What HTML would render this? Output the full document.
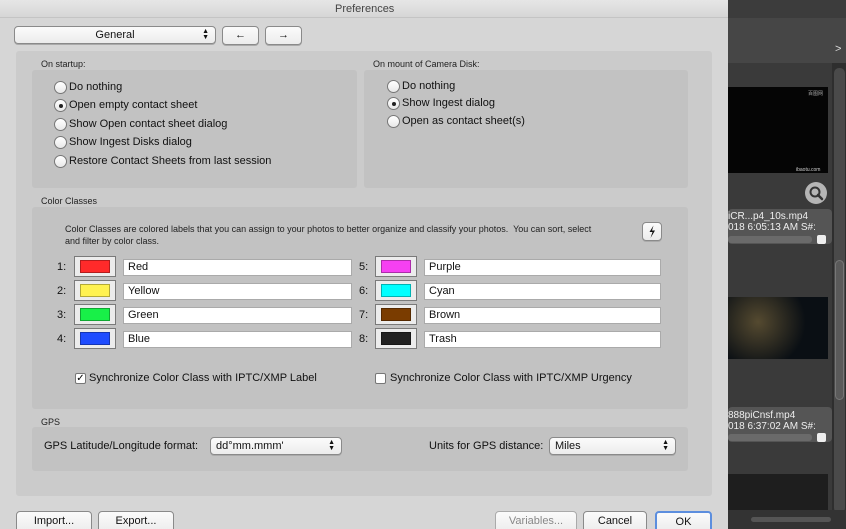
<!DOCTYPE html>
<html><head><style>
*{box-sizing:border-box;margin:0;padding:0}
html,body{width:846px;height:529px;overflow:hidden}
body{background:#2e2e2e;font-family:"Liberation Sans",sans-serif;position:relative}
.a{position:absolute}
.t{position:absolute;font-size:11px;color:#111;white-space:nowrap}
.s{font-size:9px;color:#222}
.btn{position:absolute;background:linear-gradient(#fbfbfb,#ececec);border:1px solid #8a8a8a;border-radius:4px;font-size:11px;text-align:center;color:#111;box-shadow:0 1px 0 #aaa}
.rad{position:absolute;width:13px;height:13px;border-radius:50%;border:1px solid #777;background:linear-gradient(#fff,#e8e8e8)}
.rad.on::after{content:"";position:absolute;left:3.5px;top:3.5px;width:4px;height:4px;border-radius:50%;background:#222}
.grp{position:absolute;background:#c2c2c2;border-radius:3px}
.sw{position:absolute;width:42px;height:21px;border:1px solid #7a7a7a;background:#ececec;padding:3px 5px}
.sw div{width:100%;height:100%;border:1px solid rgba(0,0,0,.3)}
.fld{position:absolute;height:17px;background:#fff;border:1px solid #aaa;font-size:11px;padding:1px 4px;color:#111}
.chk{position:absolute;width:11px;height:11px;border:1px solid #777;border-radius:2px;background:#fff;font-size:10px;line-height:9px;text-align:center}
.arr{position:absolute;right:6px;top:2px;font-size:7px;line-height:6px}
</style></head><body>
<div class="a" style="left:728px;top:0;width:118px;height:18px;background:#3c3c3c"></div>
<div class="a" style="left:728px;top:18px;width:118px;height:45px;background:#464646"></div>
<div class="t" style="left:835px;top:43px;color:#ddd;font-size:11px">&gt;</div>
<div class="a" style="left:728px;top:63px;width:104px;height:450px;background:#3a3a3a"></div>
<div class="a" style="left:834px;top:68px;width:11px;height:445px;background:#4a4a4a;border-radius:5px"></div>
<div class="a" style="left:835px;top:260px;width:9px;height:140px;background:#5a5a5a;border-radius:5px;border:1px solid #777"></div>
<div class="a" style="left:728px;top:87px;width:100px;height:86px;background:#050505"></div>
<div class="t" style="left:808px;top:90px;color:#aaa;font-size:5px">百图网</div>
<div class="t" style="left:796px;top:167px;color:#ccc;font-size:5px">ibaotu.com</div>
<div class="a" style="left:805px;top:182px;width:22px;height:22px;border-radius:50%;background:#b5b5b5"></div>
<svg class="a" style="left:805px;top:182px" width="22" height="22"><circle cx="10" cy="10" r="4.5" fill="none" stroke="#333" stroke-width="2"/><path d="M13 13l4 4" stroke="#333" stroke-width="2.5" stroke-linecap="round"/></svg>
<div class="a" style="left:728px;top:209px;width:104px;height:35px;background:#555;border-radius:4px"></div>
<div class="t" style="left:728px;top:211px;color:#eee;font-size:10px">iCR...p4_10s.mp4<br>018 6:05:13 AM S#:</div>
<div class="a" style="left:728px;top:236px;width:84px;height:7px;background:#6a6a6a;border-radius:3px"></div>
<div class="a" style="left:817px;top:235px;width:9px;height:9px;background:#eee;border-radius:2px"></div>
<div class="a" style="left:728px;top:297px;width:100px;height:62px;background:radial-gradient(circle at 30% 40%,#554a30,#0a0f14 60%)"></div>
<div class="a" style="left:728px;top:407px;width:104px;height:35px;background:#555;border-radius:4px"></div>
<div class="t" style="left:728px;top:410px;color:#eee;font-size:10px">888piCnsf.mp4<br>018 6:37:02 AM S#:</div>
<div class="a" style="left:728px;top:434px;width:84px;height:7px;background:#6a6a6a;border-radius:3px"></div>
<div class="a" style="left:817px;top:433px;width:9px;height:9px;background:#eee;border-radius:2px"></div>
<div class="a" style="left:728px;top:474px;width:100px;height:40px;background:#1e1e1e"></div>
<div class="a" style="left:728px;top:510px;width:118px;height:19px;background:#333"></div>
<div class="a" style="left:751px;top:517px;width:80px;height:5px;background:#555;border-radius:3px"></div>

<div class="a" style="left:0;top:0;width:728px;height:529px;background:#d6d6d6;border-radius:4px 4px 0 0"></div>
<div class="a" style="left:0;top:0;width:728px;height:18px;background:linear-gradient(#e6e6e6,#d6d6d6);border-bottom:1px solid #c4c4c4"></div>
<div class="t" style="left:335px;top:3px;color:#444;font-size:11px">Preferences</div>

<div class="btn" style="left:14px;top:26px;width:202px;height:18px;line-height:16px">General<span class="arr">▲<br>▼</span></div>
<div class="btn" style="left:222px;top:26px;width:37px;height:19px;line-height:16px">←</div>
<div class="btn" style="left:265px;top:26px;width:37px;height:19px;line-height:16px">→</div>

<div class="a" style="left:16px;top:51px;width:696px;height:445px;background:#cbcbcb;border-radius:3px"></div>

<div class="t s" style="left:41px;top:59px">On startup:</div>
<div class="grp" style="left:32px;top:70px;width:325px;height:118px"></div>
<div class="rad" style="left:54px;top:81px"></div><div class="t" style="left:69px;top:81px">Do nothing</div>
<div class="rad on" style="left:54px;top:99px"></div><div class="t" style="left:69px;top:99px">Open empty contact sheet</div>
<div class="rad" style="left:54px;top:118px"></div><div class="t" style="left:69px;top:118px">Show Open contact sheet dialog</div>
<div class="rad" style="left:54px;top:136px"></div><div class="t" style="left:69px;top:136px">Show Ingest Disks dialog</div>
<div class="rad" style="left:54px;top:155px"></div><div class="t" style="left:69px;top:155px">Restore Contact Sheets from last session</div>

<div class="t s" style="left:373px;top:59px">On mount of Camera Disk:</div>
<div class="grp" style="left:364px;top:70px;width:324px;height:118px"></div>
<div class="rad" style="left:387px;top:80px"></div><div class="t" style="left:402px;top:80px">Do nothing</div>
<div class="rad on" style="left:387px;top:97px"></div><div class="t" style="left:402px;top:97px">Show Ingest dialog</div>
<div class="rad" style="left:387px;top:115px"></div><div class="t" style="left:402px;top:115px">Open as contact sheet(s)</div>

<div class="t s" style="left:41px;top:196px">Color Classes</div>
<div class="grp" style="left:32px;top:207px;width:656px;height:202px"></div>
<div class="t s" style="left:65px;top:223px;line-height:12px">Color Classes are colored labels that you can assign to your photos to better organize and classify your photos.&nbsp; You can sort, select<br>and filter by color class.</div>
<div class="btn" style="left:642px;top:222px;width:20px;height:19px"></div>
<svg class="a" style="left:642px;top:222px" width="20" height="19"><path d="M11.5 3.5L7.5 10h3l-2 6 4.5-7.5h-3l1.5-5z" fill="#111"/></svg>

<div class="t" style="left:57px;top:261px">1:</div><div class="sw" style="left:74px;top:256px"><div style="background:#ff2a2a"></div></div><div class="fld" style="left:123px;top:259px;width:229px">Red</div>
<div class="t" style="left:57px;top:285px">2:</div><div class="sw" style="left:74px;top:280px"><div style="background:#fff250"></div></div><div class="fld" style="left:123px;top:283px;width:229px">Yellow</div>
<div class="t" style="left:57px;top:309px">3:</div><div class="sw" style="left:74px;top:304px"><div style="background:#18f048"></div></div><div class="fld" style="left:123px;top:307px;width:229px">Green</div>
<div class="t" style="left:57px;top:333px">4:</div><div class="sw" style="left:74px;top:328px"><div style="background:#1e4cff"></div></div><div class="fld" style="left:123px;top:331px;width:229px">Blue</div>

<div class="t" style="left:359px;top:261px">5:</div><div class="sw" style="left:375px;top:256px"><div style="background:#f640f2"></div></div><div class="fld" style="left:424px;top:259px;width:237px">Purple</div>
<div class="t" style="left:359px;top:285px">6:</div><div class="sw" style="left:375px;top:280px"><div style="background:#00ffff"></div></div><div class="fld" style="left:424px;top:283px;width:237px">Cyan</div>
<div class="t" style="left:359px;top:309px">7:</div><div class="sw" style="left:375px;top:304px"><div style="background:#7a3c00"></div></div><div class="fld" style="left:424px;top:307px;width:237px">Brown</div>
<div class="t" style="left:359px;top:333px">8:</div><div class="sw" style="left:375px;top:328px"><div style="background:#222"></div></div><div class="fld" style="left:424px;top:331px;width:237px">Trash</div>

<div class="chk" style="left:75px;top:373px">✓</div><div class="t" style="left:89px;top:372px">Synchronize Color Class with IPTC/XMP Label</div>
<div class="chk" style="left:375px;top:373px"></div><div class="t" style="left:390px;top:372px">Synchronize Color Class with IPTC/XMP Urgency</div>

<div class="t s" style="left:41px;top:417px">GPS</div>
<div class="grp" style="left:32px;top:427px;width:656px;height:44px"></div>
<div class="t" style="left:44px;top:440px">GPS Latitude/Longitude format:</div>
<div class="btn" style="left:210px;top:437px;width:132px;height:18px;line-height:16px;text-align:left;padding-left:5px">dd°mm.mmm'<span class="arr">▲<br>▼</span></div>
<div class="t" style="left:429px;top:440px">Units for GPS distance:</div>
<div class="btn" style="left:549px;top:437px;width:127px;height:18px;line-height:16px;text-align:left;padding-left:5px">Miles<span class="arr">▲<br>▼</span></div>

<div class="btn" style="left:16px;top:511px;width:76px;height:22px;line-height:18px">Import...</div>
<div class="btn" style="left:98px;top:511px;width:76px;height:22px;line-height:18px">Export...</div>
<div class="btn" style="left:495px;top:511px;width:82px;height:22px;line-height:18px;color:#888;border-color:#aaa">Variables...</div>
<div class="btn" style="left:583px;top:511px;width:64px;height:22px;line-height:18px">Cancel</div>
<div class="btn" style="left:655px;top:511px;width:57px;height:22px;line-height:18px;border:2px solid #5c8ede">OK</div>
</body></html>
